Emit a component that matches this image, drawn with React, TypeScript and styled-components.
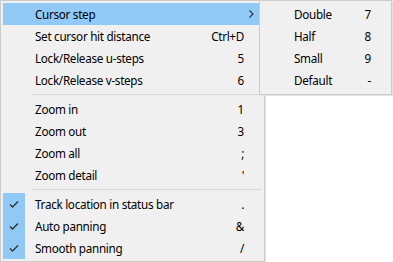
import React from 'react';
import styled, {createGlobalStyle} from 'styled-components';

const GlobalStyle = createGlobalStyle`
  html, body {
    margin: 0;
    padding: 0;
    background: #ffffff;
  }
  body {
    font-family: "Segoe UI", "Noto Sans", "Open Sans", sans-serif;
    font-size: 11.7px;
    letter-spacing: -0.3px;
    color: #000000;
  }
`

interface MenuEntry {
    label: string;
    shortcut?: string;
    checked?: boolean;
    submenu?: boolean;
    active?: boolean;
}

const mainGroups: MenuEntry[][] = [
    [
        {label: 'Cursor step', submenu: true, active: true},
        {label: 'Set cursor hit distance', shortcut: 'Ctrl+D'},
        {label: 'Lock/Release u-steps', shortcut: '5'},
        {label: 'Lock/Release v-steps', shortcut: '6'},
    ],
    [
        {label: 'Zoom in', shortcut: '1'},
        {label: 'Zoom out', shortcut: '3'},
        {label: 'Zoom all', shortcut: ';'},
        {label: 'Zoom detail', shortcut: "'"},
    ],
    [
        {label: 'Track location in status bar', shortcut: '.', checked: true},
        {label: 'Auto panning', shortcut: '&', checked: true},
        {label: 'Smooth panning', shortcut: '/', checked: true},
    ],
];

const stepItems: MenuEntry[] = [
    {label: 'Double', shortcut: '7'},
    {label: 'Half', shortcut: '8'},
    {label: 'Small', shortcut: '9'},
    {label: 'Default', shortcut: '-'},
];

function CheckMark() {
    return (
        <svg width="22" height="22" viewBox="0 0 22 22">
            <path d="M7 11.5 L9.5 14 L15 8.5" fill="none" stroke="#333333" strokeWidth="1.4"/>
        </svg>
    );
}

function Chevron() {
    return (
        <svg width="5" height="8" viewBox="0 0 5 8">
            <path d="M0.5 0.5 L4 4 L0.5 7.5" fill="none" stroke="#333333" strokeWidth="1.1"/>
        </svg>
    );
}

function Item({entry}: { entry: MenuEntry }) {
    return (
        <Row $active={!!entry.active}>
            <CheckCell $checked={!!entry.checked}>
                {entry.checked && <CheckMark/>}
            </CheckCell>
            <Label>{entry.label}</Label>
            <Shortcut>{entry.shortcut}</Shortcut>
            <ArrowCell>{entry.submenu && <Chevron/>}</ArrowCell>
        </Row>
    );
}

export default function App() {
    return (
        <>
            <GlobalStyle/>
            <Screen>
                <MainMenu>
                    {mainGroups.map((group, gi) => (
                        <React.Fragment key={gi}>
                            {gi > 0 && <Separator/>}
                            {group.map(entry => <Item key={entry.label} entry={entry}/>)}
                        </React.Fragment>
                    ))}
                </MainMenu>
                <SubMenu>
                    {stepItems.map(entry => <Item key={entry.label} entry={entry}/>)}
                </SubMenu>
            </Screen>
        </>
    );
}

const Screen = styled.div`
  position: relative;
  width: 393px;
  height: 262px;
  overflow: hidden;
`

const MenuPanel = styled.div`
  box-sizing: border-box;
  display: flex;
  flex-direction: column;
  background: #f0f0f0;
  border: 1px solid #cccccc;
  padding: 2px;
`

const MainMenu = styled(MenuPanel)`
  width: 265px;
  height: 262px;
  box-shadow: 1px 1px 0 #e2e2e2;
`

const SubMenu = styled(MenuPanel)`
  position: absolute;
  left: 259px;
  top: 0;
  width: 133px;
  height: 95px;
  box-shadow: 1px 1px 0 #e2e2e2;
`

const Row = styled.div<{ $active: boolean }>`
  display: grid;
  grid-template-columns: 22px 1fr auto 18px;
  align-items: center;
  height: 22px;
  background: ${p => p.$active ? '#91c9f7' : 'transparent'};
`

const CheckCell = styled.div<{ $checked: boolean }>`
  width: 22px;
  height: 22px;
  display: flex;
  background: ${p => p.$checked ? '#90c8f6' : 'transparent'};
`

const Label = styled.span`
  padding-left: 10px;
  white-space: nowrap;
  line-height: 22px;
`

const Shortcut = styled.span`
  text-align: right;
  white-space: nowrap;
  line-height: 22px;
`

const ArrowCell = styled.div`
  display: flex;
  align-items: center;
  justify-content: flex-end;
  padding-right: 8px;
  height: 22px;
`

const Separator = styled.div`
  height: 7px;
  margin-left: 28px;
  display: flex;
  align-items: center;
  &::after {
    content: '';
    display: block;
    width: 100%;
    height: 1px;
    background: #d7d7d7;
  }
`
